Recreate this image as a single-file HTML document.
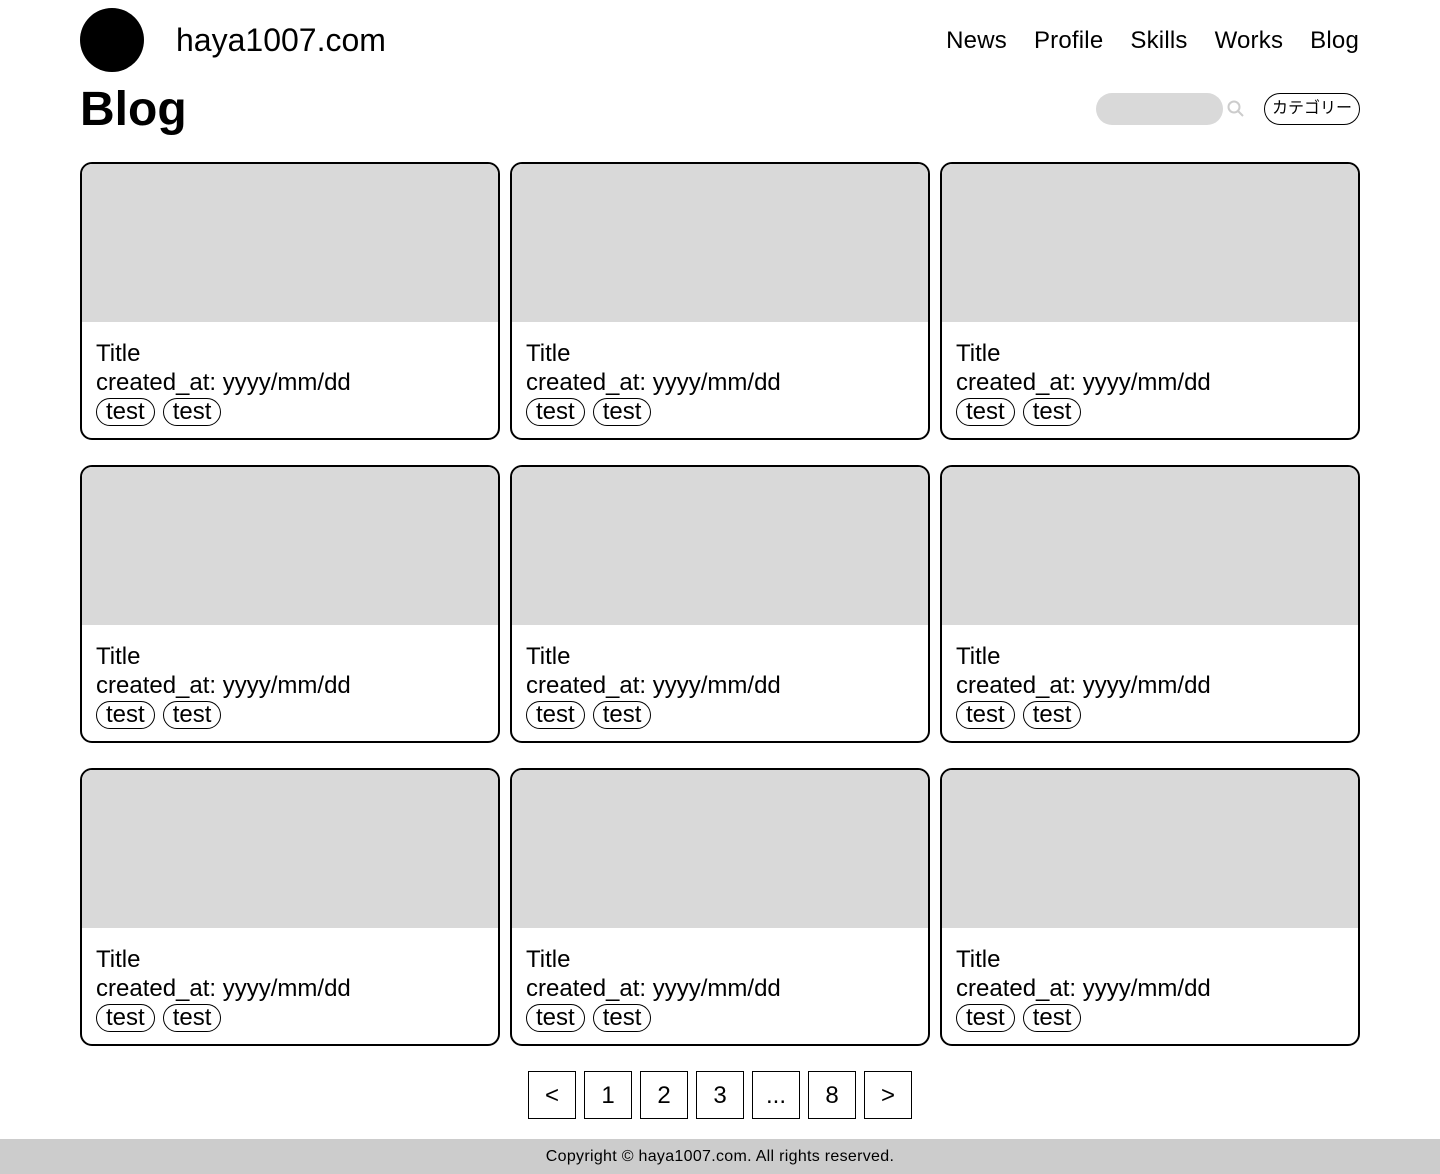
<!DOCTYPE html>
<html><head><meta charset="utf-8"><style>
*{box-sizing:border-box;margin:0;padding:0}
body{width:1440px;height:1174px;position:relative;background:#fff;font-family:"Liberation Sans","Noto Sans CJK JP",sans-serif;color:#000;overflow:hidden}
.abs{position:absolute}
.logo{left:80px;top:8px;width:64px;height:64px;border-radius:50%;background:#000}
.site{left:176px;top:20px;font-size:32px;line-height:40px}
nav{right:81px;top:26px;font-size:24px;line-height:30px;display:flex;gap:27px;letter-spacing:0.2px}
h1{position:absolute;left:80px;top:82px;font-size:48px;line-height:56px;font-weight:bold}
.search{left:1096px;top:93px;width:127px;height:32px;border-radius:16px;background:#d9d9d9}
.cat{left:1264px;top:93px;width:96px;height:32px;border:1.5px solid #000;border-radius:16px;font-size:16px;line-height:29px;text-align:center}
.card{width:420px;height:278px;border:2px solid #000;border-radius:12px;overflow:hidden}
.img{height:158px;background:#d9d9d9}
.body{padding:17px 0 0 14px;font-size:24px;line-height:29px}
.tag{display:inline-block;border:1px solid #000;border-radius:14px;padding:0 9px;line-height:26px;height:28px;margin-right:8px}
.pg{top:1071px;width:48px;height:48px;border:1px solid #000;font-size:24px;line-height:48px;text-align:center}
footer{position:absolute;left:0;top:1139px;width:1440px;height:35px;background:#ccc;font-size:16px;line-height:35px;text-align:center;letter-spacing:0.3px}
</style></head><body>
<div class="abs logo"></div>
<div class="abs site">haya1007.com</div>
<nav class="abs"><span>News</span><span>Profile</span><span>Skills</span><span>Works</span><span>Blog</span></nav>
<h1>Blog</h1>
<div class="abs search"></div>
<svg class="abs" style="left:1226px;top:99px" width="20" height="20" viewBox="0 0 20 20"><circle cx="8" cy="8" r="5.5" fill="none" stroke="#ccc" stroke-width="2"/><line x1="12" y1="12" x2="17" y2="17" stroke="#ccc" stroke-width="2"/></svg>
<div class="abs cat">カテゴリー</div>

<div class="abs card" style="left:80px;top:162px"><div class="img"></div><div class="body">Title<br>created_at: yyyy/mm/dd<br><span class="tag">test</span><span class="tag">test</span></div></div>
<div class="abs card" style="left:510px;top:162px"><div class="img"></div><div class="body">Title<br>created_at: yyyy/mm/dd<br><span class="tag">test</span><span class="tag">test</span></div></div>
<div class="abs card" style="left:940px;top:162px"><div class="img"></div><div class="body">Title<br>created_at: yyyy/mm/dd<br><span class="tag">test</span><span class="tag">test</span></div></div>
<div class="abs card" style="left:80px;top:465px"><div class="img"></div><div class="body">Title<br>created_at: yyyy/mm/dd<br><span class="tag">test</span><span class="tag">test</span></div></div>
<div class="abs card" style="left:510px;top:465px"><div class="img"></div><div class="body">Title<br>created_at: yyyy/mm/dd<br><span class="tag">test</span><span class="tag">test</span></div></div>
<div class="abs card" style="left:940px;top:465px"><div class="img"></div><div class="body">Title<br>created_at: yyyy/mm/dd<br><span class="tag">test</span><span class="tag">test</span></div></div>
<div class="abs card" style="left:80px;top:768px"><div class="img"></div><div class="body">Title<br>created_at: yyyy/mm/dd<br><span class="tag">test</span><span class="tag">test</span></div></div>
<div class="abs card" style="left:510px;top:768px"><div class="img"></div><div class="body">Title<br>created_at: yyyy/mm/dd<br><span class="tag">test</span><span class="tag">test</span></div></div>
<div class="abs card" style="left:940px;top:768px"><div class="img"></div><div class="body">Title<br>created_at: yyyy/mm/dd<br><span class="tag">test</span><span class="tag">test</span></div></div>

<div class="abs pg" style="left:528px">&lt;</div>
<div class="abs pg" style="left:584px">1</div>
<div class="abs pg" style="left:640px">2</div>
<div class="abs pg" style="left:696px">3</div>
<div class="abs pg" style="left:752px">...</div>
<div class="abs pg" style="left:808px">8</div>
<div class="abs pg" style="left:864px">&gt;</div>
<footer>Copyright © haya1007.com. All rights reserved.</footer>
</body></html>
